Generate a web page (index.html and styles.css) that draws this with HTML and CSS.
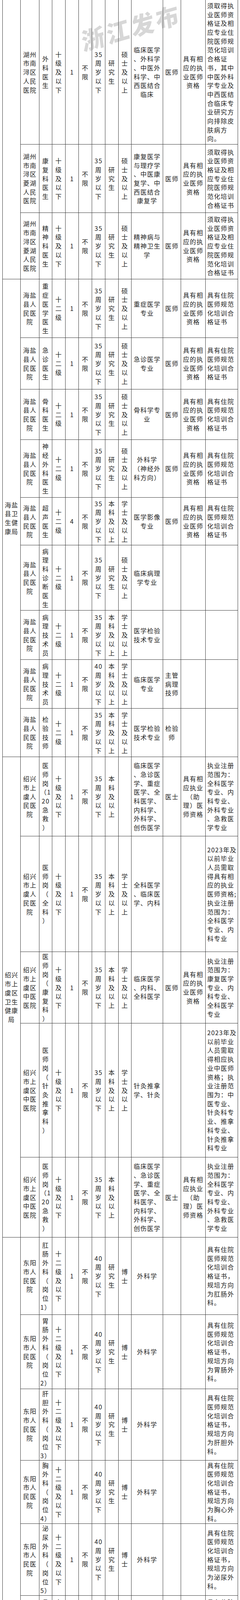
FILE: index.html
```html
<!DOCTYPE html>
<html lang="zh-CN">
<head>
<meta charset="utf-8">
<title>招聘岗位表</title>
<link rel="stylesheet" href="styles.css">
</head>
<body>
<div class="page">
<table class="grid">
<colgroup>
<col class="c-dept"><col class="c-org"><col class="c-pos"><col class="c-lv"><col class="c-num"><col class="c-sex"><col class="c-age"><col class="c-edu"><col class="c-deg"><col class="c-major"><col class="c-title"><col class="c-qual"><col class="c-other">
</colgroup>
<tbody>
<tr class="h370"><td class="dept" rowspan="3"></td><td>湖州<br>市南<br>浔区<br>人民<br>医院</td><td>外<br>科<br>医<br>生</td><td>十<br>级<br>及<br>以<br>下</td><td>1</td><td>不<br>限</td><td>35<br>周<br>岁<br>以<br>下</td><td>研<br>究<br>生</td><td>硕<br>士<br>及<br>以<br>上</td><td>临床医学<br>、外科学<br>、中医外<br>科学、中<br>西医结合<br>临床</td><td>医师</td><td>具有相<br>应的执<br>业医师<br>资格</td><td class="other">须取得执<br>业医师资<br>格证及相<br>应专业住<br>院医师规<br>范化培训<br>合格证<br>书，其中<br>中医外科<br>学专业及<br>中西医结<br>合临床专<br>业研究方<br>向排除皮<br>肤病方<br>向。</td></tr>
<tr class="h175"><td>湖州<br>市南<br>浔区<br>菱湖<br>人民<br>医院</td><td>康<br>复<br>科<br>医<br>生</td><td>十<br>级<br>及<br>以<br>下</td><td>1</td><td>不<br>限</td><td>35<br>周<br>岁<br>以<br>下</td><td>研<br>究<br>生</td><td>硕<br>士<br>及<br>以<br>上</td><td>康复医学<br>与理疗学<br>、中医康<br>复学、中<br>西医结合<br>康复学</td><td>医师</td><td>具有相<br>应的执<br>业医师<br>资格</td><td class="other">须取得执<br>业医师资<br>格证及相<br>应专业住<br>院医师规<br>范化培训<br>合格证书</td></tr>
<tr class="h170"><td>湖州<br>市南<br>浔区<br>菱湖<br>人民<br>医院</td><td>精<br>神<br>科<br>医<br>生</td><td>十<br>级<br>及<br>以<br>下</td><td>1</td><td>不<br>限</td><td>35<br>周<br>岁<br>以<br>下</td><td>研<br>究<br>生</td><td>硕<br>士<br>及<br>以<br>上</td><td>精神病与<br>精神卫生<br>学</td><td>医师</td><td>具有相<br>应的执<br>业医师<br>资格</td><td class="other">须取得执<br>业医师资<br>格证及相<br>应专业住<br>院医师规<br>范化培训<br>合格证书</td></tr>
<tr class="h150"><td class="dept" rowspan="9">海盐<br>县卫<br>生健<br>康局</td><td>海盐<br>县人<br>民医<br>院</td><td>重<br>症<br>医<br>学<br>医<br>生</td><td>十<br>二<br>级</td><td>1</td><td>不<br>限</td><td>35<br>周<br>岁<br>以<br>下</td><td>研<br>究<br>生</td><td>硕<br>士<br>及<br>以<br>上</td><td>重症医学<br>专业</td><td>医师</td><td>具有相<br>应的执<br>业医师<br>资格</td><td class="other">具有住院<br>医师规范<br>化培训合<br>格证书</td></tr>
<tr class="h132"><td>海盐<br>县人<br>民医<br>院</td><td>急<br>诊<br>医<br>生</td><td>十<br>二<br>级</td><td>1</td><td>不<br>限</td><td>35<br>周<br>岁<br>以<br>下</td><td>研<br>究<br>生</td><td>硕<br>士<br>及<br>以<br>上</td><td>急诊医学<br>专业</td><td>医师</td><td>具有相<br>应的执<br>业医师<br>资格</td><td class="other">具有住院<br>医师规范<br>化培训合<br>格证书</td></tr>
<tr class="h129"><td>海盐<br>县人<br>民医<br>院</td><td>骨<br>科<br>医<br>生</td><td>十<br>二<br>级</td><td>1</td><td>不<br>限</td><td>35<br>周<br>岁<br>以<br>下</td><td>研<br>究<br>生</td><td>硕<br>士<br>及<br>以<br>上</td><td>骨科学专<br>业</td><td>医师</td><td>具有相<br>应的执<br>业医师<br>资格</td><td class="other">具有住院<br>医师规范<br>化培训合<br>格证书</td></tr>
<tr class="h148"><td>海盐<br>县人<br>民医<br>院</td><td>神<br>经<br>外<br>科<br>医<br>生</td><td>十<br>二<br>级</td><td>1</td><td>不<br>限</td><td>35<br>周<br>岁<br>以<br>下</td><td>研<br>究<br>生</td><td>硕<br>士<br>及<br>以<br>上</td><td>外科学<br>（神经外<br>科方向）</td><td>医师</td><td>具有相<br>应的执<br>业医师<br>资格</td><td class="other">具有住院<br>医师规范<br>化培训合<br>格证书</td></tr>
<tr class="h122"><td>海盐<br>县人<br>民医<br>院</td><td>超<br>声<br>医<br>生</td><td>十<br>二<br>级</td><td>4</td><td>不<br>限</td><td>35<br>周<br>岁<br>以<br>下</td><td>本<br>科<br>及<br>以<br>上</td><td>学<br>士<br>及<br>以<br>上</td><td>医学影像<br>专业</td><td>医师</td><td>具有相<br>应的执<br>业医师<br>资格</td><td class="other">具有住院<br>医师规范<br>化培训合<br>格证书</td></tr>
<tr class="h167"><td>海盐<br>县人<br>民医<br>院</td><td>病<br>理<br>科<br>诊<br>断<br>医<br>生</td><td>十<br>二<br>级</td><td>1</td><td>不<br>限</td><td>35<br>周<br>岁<br>以<br>下</td><td>研<br>究<br>生</td><td>硕<br>士<br>及<br>以<br>上</td><td>临床病理<br>学专业</td><td></td><td></td><td class="other"></td></tr>
<tr class="h126"><td>海盐<br>县人<br>民医<br>院</td><td>病<br>理<br>技<br>术<br>员</td><td>十<br>二<br>级</td><td>1</td><td>不<br>限</td><td>35<br>周<br>岁<br>以<br>下</td><td>本<br>科<br>及<br>以<br>上</td><td>学<br>士<br>及<br>以<br>上</td><td>医学检验<br>技术专业</td><td></td><td></td><td class="other"></td></tr>
<tr class="h125"><td>海盐<br>县人<br>民医<br>院</td><td>病<br>理<br>技<br>术<br>员</td><td>十<br>二<br>级</td><td>1</td><td>不<br>限</td><td>40<br>周<br>岁<br>以<br>下</td><td>本<br>科<br>及<br>以<br>上</td><td>学<br>士<br>及<br>以<br>上</td><td>临床医学<br>专业</td><td>主管<br>病理<br>技师</td><td></td><td class="other"></td></tr>
<tr class="h124"><td>海盐<br>县人<br>民医<br>院</td><td>检<br>验<br>技<br>师</td><td>十<br>二<br>级</td><td>1</td><td>不<br>限</td><td>35<br>周<br>岁<br>以<br>下</td><td>本<br>科<br>及<br>以<br>上</td><td>学<br>士<br>及<br>以<br>上</td><td>医学检验<br>技术专业</td><td>检验<br>师</td><td></td><td class="other"></td></tr>
<tr class="h203"><td class="dept" rowspan="5">绍兴<br>市上<br>虞区<br>卫生<br>健康<br>局</td><td>绍兴<br>市上<br>虞人<br>民医<br>院</td><td>医<br>师<br>岗<br>（1<br>20<br>急<br>救<br>）</td><td>十<br>级<br>及<br>以<br>下</td><td>1</td><td>不<br>限</td><td>35<br>周<br>岁<br>以<br>下</td><td>本<br>科<br>及<br>以<br>上</td><td></td><td>临床医学<br>、急诊医<br>学、重症<br>医学、全<br>科医学、<br>内科学、<br>外科学、<br>创伤医学</td><td>医士</td><td>具有相<br>应执业<br>（助<br>理）医<br>师资格</td><td class="other">执业注册<br>范围为：<br>全科医学<br>专业、内<br>科专业、<br>外科专业<br>、急救医<br>学专业</td></tr>
<tr class="h296"><td>绍兴<br>市上<br>虞人<br>民医<br>院</td><td>医<br>师<br>岗<br>（<br>全<br>科<br>）</td><td>十<br>级<br>及<br>以<br>下</td><td>1</td><td>不<br>限</td><td>35<br>周<br>岁<br>以<br>下</td><td>本<br>科<br>及<br>以<br>上</td><td>学<br>士<br>及<br>以<br>上</td><td>全科医学<br>、临床医<br>学、内科</td><td></td><td></td><td class="other">2023年及<br>以前毕业<br>人员需取<br>得具有相<br>应的执业<br>医师资格;<br>执业注册<br>范围为：<br>全科医学<br>专业、内<br>科专业</td></tr>
<tr class="h183"><td>绍兴<br>市上<br>虞区<br>中医<br>医院</td><td>医<br>师<br>岗<br>（<br>康<br>复<br>科<br>）</td><td>十<br>级<br>及<br>以<br>下</td><td>1</td><td>不<br>限</td><td>35<br>周<br>岁<br>以<br>下</td><td>本<br>科<br>及<br>以<br>上</td><td>学<br>士<br>及<br>以<br>上</td><td>临床医学<br>、内科、<br>全科医学</td><td>医师</td><td>具有相<br>应的执<br>业医师<br>资格</td><td class="other">执业注册<br>范围为：<br>康复医学<br>专业、内<br>科专业、<br>全科医学<br>专业</td></tr>
<tr class="h343"><td>绍兴<br>市上<br>虞区<br>中医<br>医院</td><td>医<br>师<br>岗<br>（<br>针<br>灸<br>推<br>拿<br>科<br>）</td><td>十<br>级<br>及<br>以<br>下</td><td>1</td><td>不<br>限</td><td>35<br>周<br>岁<br>以<br>下</td><td>本<br>科<br>及<br>以<br>上</td><td>学<br>士<br>及<br>以<br>上</td><td>针灸推拿<br>学、针灸</td><td></td><td></td><td class="other">2023年及<br>以前毕业<br>人员需取<br>得相应执<br>业中医师<br>资格；执<br>业注册范<br>围为：中<br>医专业、<br>针灸科专<br>业、推拿<br>科专业、<br>针灸推拿<br>科专业</td></tr>
<tr class="h205"><td>绍兴<br>市上<br>虞区<br>中医<br>医院</td><td>医<br>师<br>岗<br>（1<br>20<br>急<br>救<br>）</td><td>十<br>级<br>及<br>以<br>下</td><td>1</td><td>不<br>限</td><td>35<br>周<br>岁<br>以<br>下</td><td>本<br>科<br>及<br>以<br>上</td><td></td><td>临床医学<br>、急诊医<br>学、重症<br>医学、全<br>科医学、<br>内科学、<br>外科学、<br>创伤医学</td><td>医士</td><td>具有相<br>应执业<br>（助<br>理）医<br>师资格</td><td class="other">执业注册<br>范围为：<br>全科医学<br>专业、内<br>科专业、<br>外科专业<br>、急救医<br>学专业</td></tr>
<tr class="h198"><td class="dept dept-top" rowspan="12">东阳<br>市卫<br>生健<br>康局</td><td>东阳<br>市人<br>民医<br>院</td><td>肛<br>肠<br>外<br>科<br>（<br>岗<br>位<br>1）</td><td>十<br>二<br>级<br>及<br>以<br>下</td><td>1</td><td>不<br>限</td><td>40<br>周<br>岁<br>以<br>下</td><td>研<br>究<br>生</td><td>博<br>士</td><td>外科学</td><td></td><td></td><td class="other">具有住院<br>医师规范<br>化培训合<br>格证书，<br>规培方向<br>为肛肠外<br>科。</td></tr>
<tr class="h190"><td>东阳<br>市人<br>民医<br>院</td><td>胃<br>肠<br>外<br>科<br>（<br>岗<br>位<br>2）</td><td>十<br>二<br>级<br>及<br>以<br>下</td><td>1</td><td>不<br>限</td><td>40<br>周<br>岁<br>以<br>下</td><td>研<br>究<br>生</td><td>博<br>士</td><td>外科学</td><td></td><td></td><td class="other">具有住院<br>医师规范<br>化培训合<br>格证书，<br>规培方向<br>为胃肠外<br>科。</td></tr>
<tr class="h181"><td>东阳<br>市人<br>民医<br>院</td><td>肝<br>胆<br>外<br>科<br>（<br>岗<br>位<br>3）</td><td>十<br>二<br>级<br>及<br>以<br>下</td><td>1</td><td>不<br>限</td><td>40<br>周<br>岁<br>以<br>下</td><td>研<br>究<br>生</td><td>博<br>士</td><td>外科学</td><td></td><td></td><td class="other">具有住院<br>医师规范<br>化培训合<br>格证书，<br>规培方向<br>为肝胆外<br>科。</td></tr>
<tr class="h162"><td>东阳<br>市人<br>民医<br>院</td><td>胸<br>外<br>科<br>（<br>岗<br>位<br>4）</td><td>十<br>二<br>级<br>及<br>以<br>下</td><td>1</td><td>不<br>限</td><td>40<br>周<br>岁<br>以<br>下</td><td>研<br>究<br>生</td><td>博<br>士</td><td>外科学</td><td></td><td></td><td class="other">具有住院<br>医师规范<br>化培训合<br>格证书，<br>规培方向<br>为胸心外<br>科。</td></tr>
<tr class="h184"><td>东阳<br>市人<br>民医<br>院</td><td>泌<br>尿<br>外<br>科<br>（<br>岗<br>位<br>5）</td><td>十<br>二<br>级<br>及<br>以<br>下</td><td>1</td><td>不<br>限</td><td>40<br>周<br>岁<br>以<br>下</td><td>研<br>究<br>生</td><td>博<br>士</td><td>外科学</td><td></td><td></td><td class="other">具有住院<br>医师规范<br>化培训合<br>格证书，<br>规培方向<br>为泌尿外<br>科。</td></tr>
<tr class="h147"><td>东阳<br>市人<br>民医<br>院</td><td>骨<br>科<br>（<br>岗<br>位<br>6）</td><td>十<br>二<br>级<br>及<br>以<br>下</td><td>1</td><td>不<br>限</td><td>40<br>周<br>岁<br>以<br>下</td><td>研<br>究<br>生</td><td>博<br>士</td><td>骨科学</td><td></td><td></td><td class="other">具有住院<br>医师规范<br>化培训合<br>格证书，<br>规培方向<br>为骨科。</td></tr>
<tr class="h170"><td>东阳<br>市人<br>民医<br>院</td><td>妇<br>科<br>（<br>岗<br>位<br>7）</td><td>十<br>二<br>级<br>及<br>以<br>下</td><td>1</td><td>不<br>限</td><td>40<br>周<br>岁<br>以<br>下</td><td>研<br>究<br>生</td><td>博<br>士</td><td>妇产科学</td><td></td><td></td><td class="other">具有住院<br>医师规范<br>化培训合<br>格证书，<br>规培方向<br>为妇产<br>科。</td></tr>
<tr class="h160"><td>东阳<br>市人<br>民医<br>院</td><td>心<br>内<br>科<br>（<br>岗<br>位<br>8）</td><td>十<br>二<br>级<br>及<br>以<br>下</td><td>1</td><td>不<br>限</td><td>40<br>周<br>岁<br>以<br>下</td><td>研<br>究<br>生</td><td>博<br>士</td><td>内科学<br>（心血管<br>内科方<br>向）</td><td></td><td></td><td class="other">具有住院<br>医师规范<br>化培训合<br>格证书，<br>规培方向<br>为内科。</td></tr>
<tr class="h166"><td>东阳<br>市人<br>民医<br>院</td><td>心<br>外<br>科<br>（<br>岗<br>位<br>9）</td><td>十<br>二<br>级<br>及<br>以<br>下</td><td>1</td><td>不<br>限</td><td>40<br>周<br>岁<br>以<br>下</td><td>研<br>究<br>生</td><td>博<br>士</td><td>外科学<br>（心脏外<br>科方向）</td><td></td><td></td><td class="other">具有住院<br>医师规范<br>化培训合<br>格证书，<br>规培方向<br>为胸心外<br>科。</td></tr>
<tr class="h216"><td>东阳<br>市人<br>民医<br>院</td><td>呼<br>吸<br>内<br>科<br>（<br>岗<br>位<br>10<br>）</td><td>十<br>二<br>级<br>及<br>以<br>下</td><td>1</td><td>不<br>限</td><td>40<br>周<br>岁<br>以<br>下</td><td>研<br>究<br>生</td><td>博<br>士</td><td>内科学<br>（呼吸内<br>科方向）</td><td></td><td></td><td class="other">具有住院<br>医师规范<br>化培训合<br>格证书，<br>规培方向<br>为内科。</td></tr>
<tr class="h192"><td>东阳<br>市人<br>民医<br>院</td><td>精<br>神<br>科<br>（<br>岗<br>位<br>11<br>）</td><td>十<br>二<br>级<br>及<br>以<br>下</td><td>1</td><td>不<br>限</td><td>35<br>周<br>岁<br>以<br>下</td><td>研<br>究<br>生</td><td>硕<br>士<br>及<br>以<br>上</td><td>精神病与<br>精神卫生<br>学</td><td></td><td></td><td class="other">具有住院<br>医师规范<br>化培训合<br>格证书，<br>规培方向<br>为精神<br>科。</td></tr>
<tr class="h200"><td></td><td></td><td></td><td></td><td></td><td></td><td></td><td></td><td></td><td></td><td></td><td class="other"></td></tr>
</tbody>
</table>
<div class="watermark">浙江发布</div>
</div>
</body>
</html>
```

FILE: styles.css
```css
html, body {
  margin: 0;
  padding: 0;
  background: #ffffff;
}

body {
  overflow: hidden;
}

.page {
  position: relative;
  height: 5137px;
  overflow: hidden;
  padding-left: 6px;
  box-sizing: border-box;
}

.grid {
  border-collapse: collapse;
  table-layout: fixed;
  width: 603px;
  margin-top: -1px;
  font-family: "Noto Sans CJK SC", sans-serif;
  font-size: 16px;
  line-height: 22.7px;
  letter-spacing: 1.3px;
  color: #222222;
}

.c-dept { width: 46px; }
.c-org { width: 48px; }
.c-pos { width: 33px; }
.c-lv { width: 34px; }
.c-num { width: 34px; }
.c-sex { width: 34px; }
.c-age { width: 34px; }
.c-edu { width: 34px; }
.c-deg { width: 33px; }
.c-major { width: 81px; }
.c-title { width: 46px; }
.c-qual { width: 63px; }
.c-other { width: 83px; }

.grid td {
  border: 1px solid #3a3a3a;
  padding: 0 1px;
  text-align: center;
  vertical-align: middle;
  white-space: nowrap;
  overflow: visible;
}

.grid td.other {
  text-align: left;
  padding-left: 4px;
}

.grid td.dept-top {
  vertical-align: top;
  padding-top: 1203px;
}

.h370 { height: 370px; }
.h175 { height: 175px; }
.h170 { height: 170px; }
.h150 { height: 150px; }
.h132 { height: 132px; }
.h129 { height: 129px; }
.h148 { height: 148px; }
.h122 { height: 122px; }
.h167 { height: 167px; }
.h126 { height: 126px; }
.h125 { height: 125px; }
.h124 { height: 124px; }
.h203 { height: 203px; }
.h296 { height: 296px; }
.h183 { height: 183px; }
.h343 { height: 343px; }
.h205 { height: 205px; }
.h198 { height: 198px; }
.h190 { height: 190px; }
.h181 { height: 181px; }
.h162 { height: 162px; }
.h184 { height: 184px; }
.h147 { height: 147px; }
.h160 { height: 160px; }
.h166 { height: 166px; }
.h216 { height: 216px; }
.h192 { height: 192px; }
.h200 { height: 200px; }

.watermark {
  position: absolute;
  left: 336px;
  top: 68px;
  transform: translate(-50%, -50%) rotate(-16deg) skewX(-8deg);
  font-family: "Noto Sans CJK SC", sans-serif;
  font-weight: 900;
  font-size: 60px;
  line-height: 1;
  letter-spacing: 6px;
  color: rgba(110, 110, 110, 0.28);
  white-space: nowrap;
  pointer-events: none;
}
```
